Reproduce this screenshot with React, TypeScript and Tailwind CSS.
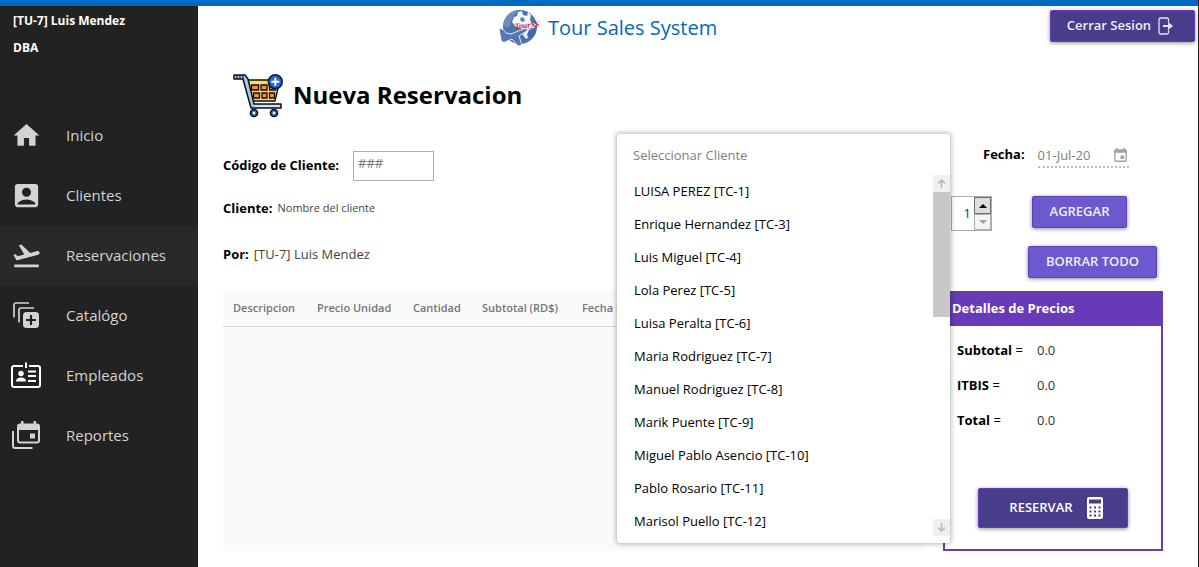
import { useState } from "react";
import type { ReactNode } from "react";
import { MdAccountBox, MdEvent, MdFlightTakeoff, MdHome } from "react-icons/md";

const clients = [
  "LUISA PEREZ [TC-1]",
  "Enrique Hernandez [TC-3]",
  "Luis Miguel [TC-4]",
  "Lola Perez [TC-5]",
  "Luisa Peralta [TC-6]",
  "Maria Rodriguez [TC-7]",
  "Manuel Rodriguez [TC-8]",
  "Marik Puente [TC-9]",
  "Miguel Pablo Asencio [TC-10]",
  "Pablo Rosario [TC-11]",
  "Marisol Puello [TC-12]",
];

function CatalogIcon() {
  return (
    <svg width="26" height="26" viewBox="0 0 26 26" fill="none" aria-hidden="true">
      <path d="M1 15.500V3a2 2 0 0 1 2-2h13M6 20.500V8a2 2 0 0 1 2-2h13" stroke="#d3d3d3" strokeWidth="1.700" />
      <rect x="10" y="10" width="16" height="16" rx="3.500" fill="#d3d3d3" />
      <path d="M18 13v10M13 18h10" stroke="#222222" strokeWidth="2.200" />
    </svg>
  );
}

function BadgeIcon() {
  return (
    <svg width="30" height="26" viewBox="0 0 30 26" fill="none" aria-hidden="true">
      <path d="M12 4H3a2 2 0 0 0-2 2v17a2 2 0 0 0 2 2h24a2 2 0 0 0 2-2V6a2 2 0 0 0-2-2h-9" stroke="#fff" strokeWidth="2" />
      <path d="M15 0.500V6" stroke="#fff" strokeWidth="2" />
      <circle cx="10" cy="11.500" r="2.700" fill="#fff" />
      <path d="M5 19.500c0-3 2.500-4 5-4s5 1 5 4z" fill="#fff" />
      <path d="M17 9.500h8M17 14h8M17 19h8" stroke="#fff" strokeWidth="2" />
    </svg>
  );
}

function ReportsIcon() {
  return (
    <svg width="28" height="28" viewBox="0 0 28 28" fill="none" aria-hidden="true">
      <path d="M1 10v15a2 2 0 0 0 2 2h17.500" stroke="#d3d3d3" strokeWidth="2" />
      <rect x="6" y="3.500" width="21" height="18" rx="2" stroke="#d3d3d3" strokeWidth="2" />
      <path d="M6 3.500h21V9H6zM9 0h2.500v4H9zM21.500 0H24v4h-2.500z" fill="#d3d3d3" />
      <rect x="18" y="12.500" width="5" height="5" fill="#d3d3d3" />
    </svg>
  );
}

function LogoutIcon() {
  return (
    <svg width="16" height="18" viewBox="0 0 16 18" fill="none" aria-hidden="true">
      <path d="M10.500 5V2.500A1.500 1.500 0 0 0 9 1H2.500A1.500 1.500 0 0 0 1 2.500v13A1.500 1.500 0 0 0 2.500 17H9a1.500 1.500 0 0 0 1.500-1.500V13" stroke="#e6e3f3" strokeWidth="1.300" />
      <path d="M5 8h5V5l5 4-5 4v-3H5z" fill="#e6e3f3" />
    </svg>
  );
}

function CalculatorIcon() {
  return (
    <svg width="16" height="22" viewBox="0 0 16 22" aria-hidden="true">
      <rect width="16" height="22" rx="2" fill="#fff" />
      <path d="M2 2.500h12v4H2zM2.500 9.500h2v2h-2zM7 9.500h2v2H7zM11.500 9.500h2v2h-2zM2.500 13.500h2v2h-2zM7 13.500h2v2H7zM11.500 13.500h2v2h-2zM2.500 17.500h2v2h-2zM7 17.500h2v2H7zM11.500 17.500h2v2h-2z" fill="#483d8b" />
    </svg>
  );
}

function CartIcon() {
  return (
    <svg width="50" height="44" viewBox="0 0 50 44" aria-hidden="true">
      <path d="M15 6h32l-5 21H19z" fill="#ffda6b" stroke="#111" strokeWidth="1.400" />
      <path d="M17 10h29l-1 4H18z" fill="#ffc250" />
      <g fill="#f58a4b" stroke="#111" strokeWidth="1.300">
        <path d="M18.500 11h7v5h-7zM28 11h6v5h-6zM36.500 11h6v5h-6zM20.500 19h6v5h-6zM29 19h5v5h-5zM36.500 19h5v5h-5z" />
      </g>
      <path d="M1 1h11l3 4 6 25h27v4H18L10 5H1z" fill="#9fcbfa" stroke="#111" strokeWidth="1.500" strokeLinejoin="round" />
      <path d="M4 1v4M7 1v4M10 1v4" stroke="#111" />
      <path d="M22 32h25" stroke="#dceeff" strokeWidth="1.500" />
      <g fill="#3c7cdb" stroke="#111" strokeWidth="1.700">
        <circle cx="21" cy="39" r="3.500" />
        <circle cx="41" cy="39" r="3.500" />
      </g>
      <path d="M21 38v2M41 38v2" stroke="#fff" strokeWidth="2" />
      <circle cx="42.300" cy="7.700" r="6.900" fill="#2368d1" stroke="#0d1c38" strokeWidth="1.600" />
      <path d="M42.300 3.700v8M38.300 7.700h8" stroke="#fff" strokeWidth="2" />
    </svg>
  );
}

function BrandLogo() {
  return (
    <svg width="40" height="38" viewBox="0 0 40 38" aria-hidden="true">
      <circle cx="21" cy="18" r="17" fill="#4d72b0" />
      <path d="M5 12C8 5 14 1 20 1c-4 4-8 8-9 16l-4 2c-2-2-3-4-2-7z" fill="#6c8cc0" />
      <path d="M19 3l4-1 1 4 4 1 1-4 3 3-1 5 2 3 4 1-2 4-8 1-3 3-2-4-5-1-4-5 2-5 3-1z" fill="#f6f8fc" />
      <path d="M22 8l3 1 1 3-3 1-2-2z" fill="#5f82bb" />
      <path d="M23 21l8-1 3 3-3 4-4 3-3-4z" fill="#e9eef7" />
      <path d="M30 21c3-1 5-1 7 0-1 4-4 7-7 9l-2-4z" fill="#4468a5" />
      <path d="M0 20c3-1 5 1 7 4l5 1 12-5c3-1 5 0 4 2l-8 5 3 9-4 1-6-7-7 3c-2 1-4-1-4-3z" fill="#5578b3" stroke="#f0f5fb" strokeWidth="0.900" />
      <text x="16" y="20" fill="#d3162c" fontFamily="Liberation Serif, serif" fontSize="8" fontStyle="italic" fontWeight="700" transform="rotate(-6 16 20)">TourSS</text>
    </svg>
  );
}

const menu: { label: string; icon: ReactNode; active?: boolean }[] = [
  { label: "Inicio", icon: <MdHome size={31} /> },
  { label: "Clientes", icon: <MdAccountBox size={31} /> },
  { label: "Reservaciones", icon: <MdFlightTakeoff size={31} />, active: true },
  { label: "Catalógo", icon: <CatalogIcon /> },
  { label: "Empleados", icon: <BadgeIcon /> },
  { label: "Reportes", icon: <ReportsIcon /> },
];

function Sidebar() {
  return (
    <aside className="flex w-[198px] shrink-0 flex-col bg-[#222222]">
      <div className="flex h-[100px] flex-col gap-[9px] px-[13px] pt-[6px] text-[12px] leading-[18px] font-bold text-white">
        <p>[TU-7] Luis Mendez</p>
        <p>DBA</p>
      </div>
      <nav>
        {menu.map((item) => (
          <a
            key={item.label}
            href={"#" + item.label.toLowerCase()}
            className={item.active ? "flex h-[60px] items-center gap-[14px] bg-[#292929] pb-[2px] text-[15px] text-[#d3d3d3]" : "flex h-[60px] items-center gap-[14px] pb-[2px] text-[15px] text-[#d3d3d3]"}
          >
            <span className="flex w-[52px] justify-center">{item.icon}</span>
            {item.label}
          </a>
        ))}
      </nav>
    </aside>
  );
}

function ClientPicker() {
  return (
    <div className="absolute top-[-16px] right-[-27px] z-10 w-[333px] rounded-[3px] bg-white pb-[5px] shadow-[0_0_5px_1px_rgba(0,0,0,0.3)]">
      <p id="client-hint" className="h-[41px] pt-[11px] pl-[16px] text-[13px] leading-[20px] text-[#808080]">Seleccionar Cliente</p>
      <div className="flex">
        <ul role="listbox" aria-labelledby="client-hint" className="grow">
          {clients.map((name) => (
            <li key={name} role="option" aria-selected="false" className="h-[33px] pl-[17px] text-[13px] leading-[33px] text-black">
              {name}
            </li>
          ))}
        </ul>
        <div className="flex w-[17px] flex-col pb-[2px]">
          <button aria-label="Subir" className="flex size-[17px] items-center justify-center bg-[#f0f0f0]">
            <svg width="9" height="9" viewBox="0 0 9 9" fill="none" stroke="#b8b8b8" strokeWidth="1.500"><path d="M4.500 9V1M1 4.500 4.500 1 8 4.500" /></svg>
          </button>
          <div className="h-[125px] bg-[#c8c8c8]" />
          <button aria-label="Bajar" className="mt-auto flex size-[17px] items-center justify-center bg-[#f0f0f0]">
            <svg width="9" height="9" viewBox="0 0 9 9" fill="none" stroke="#b8b8b8" strokeWidth="1.500"><path d="M4.500 0v8M1 4.500 4.500 8 8 4.500" /></svg>
          </button>
        </div>
      </div>
    </div>
  );
}

function Quantity() {
  const [value, setValue] = useState(1);
  return (
    <div className="flex h-[35px] w-[41px] border border-[#abadb3] bg-white">
      <input
        type="text"
        inputMode="numeric"
        aria-label="Cantidad"
        value={value}
        onChange={(e) => setValue(Number(e.target.value) || 1)}
        className="w-[22px] pr-[3px] text-right text-[13px] text-[#0a3a66] outline-none"
      />
      <div className="flex w-[17px] flex-col">
        <button aria-label="Aumentar" onClick={() => setValue(value + 1)} className="flex h-[17px] items-center justify-center border border-[#707070] bg-[#dddddd]">
          <svg width="8" height="4" viewBox="0 0 8 4"><path d="M0 4 4 0l4 4z" fill="#000" /></svg>
        </button>
        <button aria-label="Disminuir" onClick={() => setValue(Math.max(1, value - 1))} className="flex h-[16px] items-center justify-center border border-[#adb2b5] bg-[#f4f4f4]">
          <svg width="8" height="4" viewBox="0 0 8 4"><path d="M0 0h8L4 4z" fill="#a0a0a0" /></svg>
        </button>
      </div>
    </div>
  );
}

const raised = "shadow-[0_1px_4px_rgba(0,0,0,0.45)]";

export default function App() {
  return (
    <div className="flex min-h-screen flex-col border-r border-[#222222] bg-white font-['Open_Sans','Noto_Sans',sans-serif] text-black">
      <div className="h-[6px] bg-[#0069c0]" />
      <div className="flex grow">
        <Sidebar />
        <main className="min-w-0 grow">
          <header className="flex h-[48px] items-start pr-[3px] pl-[301px]">
            <div className="flex items-center gap-[9px] pt-[2px]">
              <BrandLogo />
              <span className="text-[20px] leading-[40px] text-[#0069c0]">Tour Sales System</span>
            </div>
            <button className={"mt-[4px] ml-auto flex h-[32px] w-[145px] items-center justify-center gap-[7px] rounded-[2px] border border-[#673ab7] bg-[#483d8b] pr-[4px] text-[13px] font-semibold text-[#f0eef8] " + raised}>
              Cerrar Sesion
              <LogoutIcon />
            </button>
          </header>

          <div className="flex items-center gap-[10px] pt-[20px] pl-[35px]">
            <CartIcon />
            <h1 className="pb-[2px] text-[24px] leading-[42px] font-bold">Nueva Reservacion</h1>
          </div>

          <div className="grid grid-cols-[minmax(0,1fr)_220px] gap-x-[20px] pt-[32px] pr-[35px] pb-[16px] pl-[25px]">
            <form className="relative h-[141px]">
              <div className="flex h-[31px] items-center gap-[10px]">
                <label htmlFor="client-code" className="w-[120px] text-[13px] font-bold whitespace-nowrap">Código de Cliente:</label>
                <input id="client-code" placeholder="###" className="h-[30px] w-[81px] border border-[#abadb3] px-[4px] pb-[6px] text-[13px] placeholder:text-[#757575]" />
              </div>
              <p className="mt-[17px] flex items-center gap-[5px] leading-[20px]">
                <span className="text-[13px] font-bold">Cliente:</span>
                <span className="text-[11px] text-[#444444]">Nombre del cliente</span>
              </p>
              <p className="mt-[26px] flex items-center gap-[5px] leading-[20px]">
                <span className="text-[13px] font-bold">Por:</span>
                <span className="text-[13px] text-[#444444]">[TU-7] Luis Mendez</span>
              </p>
              <ClientPicker />
            </form>

            <div className="-mt-[6px] flex flex-col">
              <div className="flex h-[24px] items-start gap-[13px] pl-[40px]">
                <label htmlFor="date" className="text-[13px] leading-[20px] font-bold">Fecha:</label>
                <div className="flex w-[91px] items-center border-b-2 border-dotted border-[#bdbdbd]">
                  <input id="date" readOnly value="01-Jul-20" className="h-[22px] w-[74px] text-[13px] text-[#808080] outline-none" />
                  <MdEvent size={17} color="#a3a3a3" />
                </div>
              </div>
              <div className="mt-[28px] flex items-start justify-between pr-[36px] pl-[8px]">
                <Quantity />
                <button className={"h-[32px] w-[95px] rounded-[2px] border border-[#673ab7] bg-[#6a5acd] text-[13px] font-semibold text-[#f0eef8] " + raised}>AGREGAR</button>
              </div>
              <button className={"mt-[15px] mr-[6px] h-[32px] w-[129px] self-end rounded-[2px] border border-[#673ab7] bg-[#6a5acd] text-[13px] font-semibold text-[#f0eef8] " + raised}>BORRAR TODO</button>
            </div>

            <div className="h-[260px] overflow-hidden bg-[#fafafa]">
              <table className="w-full table-fixed text-left text-[11px] text-[#757575]">
                <colgroup>
                  <col className="w-[84px]" />
                  <col className="w-[96px]" />
                  <col className="w-[69px]" />
                  <col className="w-[100px]" />
                  <col />
                </colgroup>
                <thead>
                  <tr className="h-[35px] border-b border-[#d8d8d8] whitespace-nowrap">
                    <th className="pl-[10px] font-semibold">Descripcion</th>
                    <th className="pl-[10px] font-semibold">Precio Unidad</th>
                    <th className="pl-[10px] font-semibold">Cantidad</th>
                    <th className="pl-[10px] font-semibold">Subtotal (RD$)</th>
                    <th className="pl-[10px] font-semibold">Fecha Inicio</th>
                  </tr>
                </thead>
                <tbody />
              </table>
            </div>

            <section className="flex h-[260px] flex-col border-2 border-[#673ab7]">
              <h2 className="h-[33px] bg-[#673ab7] pl-[7px] text-[13px] leading-[31px] font-bold text-white">Detalles de Precios</h2>
              <dl className="grid grid-cols-[80px_1fr] pt-[7px] pl-[12px] text-[13px] leading-[35px]">
                <dt><b>Subtotal</b> =</dt>
                <dd className="text-[#333333]">0.0</dd>
                <dt><b>ITBIS</b> =</dt>
                <dd className="text-[#333333]">0.0</dd>
                <dt><b>Total</b> =</dt>
                <dd className="text-[#333333]">0.0</dd>
              </dl>
              <button className={"mt-auto mb-[21px] ml-[33px] flex h-[40px] w-[150px] items-center justify-center gap-[14px] rounded-[2px] border border-[#673ab7] bg-[#483d8b] pl-[6px] text-[13px] font-semibold text-white " + raised}>
                RESERVAR
                <CalculatorIcon />
              </button>
            </section>
          </div>
        </main>
      </div>
    </div>
  );
}
